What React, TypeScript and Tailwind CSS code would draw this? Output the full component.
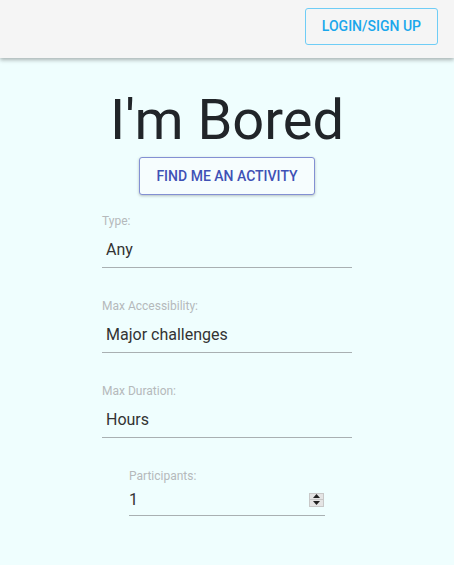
import React from 'react';

type Field = {
  label: string;
  value: string;
};

const fields: Field[] = [
  { label: 'Type:', value: 'Any' },
  { label: 'Max Accessibility:', value: 'Major challenges' },
  { label: 'Max Duration:', value: 'Hours' },
];

function SelectField({ label, value }: Field) {
  return (
    <div className="w-[250px] pt-[11px]">
      <div className="text-[12px] leading-[14px] text-[#b5b9bb]">{label}</div>
      <div className="mt-[12px] border-b border-[#a9b0b2] pb-[8px] pl-[4px] text-[16px] leading-[19px] text-[#333]">
        {value}
      </div>
    </div>
  );
}

export default function App() {
  return (
    <div className="min-h-[565px] bg-[#effefe] font-['Roboto',sans-serif]">
      <header className="flex h-[58px] items-start justify-end bg-[#f5f5f5] px-4 pt-[8px] shadow-[0_2px_4px_rgba(0,0,0,0.3)]">
        <button className="h-[37px] rounded-[3px] border border-[#6fcdf6] px-[16px] text-[14px] font-medium uppercase tracking-[0px] text-[#1aa7ec]">
          Login/Sign up
        </button>
      </header>

      <main className="flex flex-col items-center">
        <h1 className="mt-[29px] text-[56px] leading-[66px] text-[#212529]">I'm Bored</h1>
        <button className="mt-[4px] h-[38px] rounded-[3px] border border-[#8390d3] bg-[#f6fdfe] px-4 text-[14px] font-medium uppercase tracking-[0px] text-[#3f51b5] shadow-[0_1px_3px_rgba(0,0,0,0.25)]">
          Find me an activity
        </button>

        <div className="mt-[8px] flex flex-col gap-[20px]">
          {fields.map((f) => (
            <SelectField key={f.label} label={f.label} value={f.value} />
          ))}
        </div>

        <div className="mt-[31px] w-[196px]">
          <div className="text-[12px] leading-[14px] text-[#b5b9bb]">Participants:</div>
          <div className="mt-[7px] flex items-center justify-between border-b border-[#a9b0b2] pb-[6px]">
            <span className="text-[16px] leading-[19px] text-[#333]">1</span>
            <div className="mr-[1px] flex h-[14px] w-[15px] flex-col border border-[#c8c8c8] bg-[#e4e4e4]">
              <div className="flex flex-1 items-center justify-center border-b border-[#c8c8c8]">
                <svg width="7" height="4" viewBox="0 0 7 4"><path d="M0 4L3.5 0L7 4Z" fill="#222" /></svg>
              </div>
              <div className="flex flex-1 items-center justify-center">
                <svg width="7" height="4" viewBox="0 0 7 4"><path d="M0 0L3.5 4L7 0Z" fill="#222" /></svg>
              </div>
            </div>
          </div>
        </div>
      </main>
    </div>
  );
}
